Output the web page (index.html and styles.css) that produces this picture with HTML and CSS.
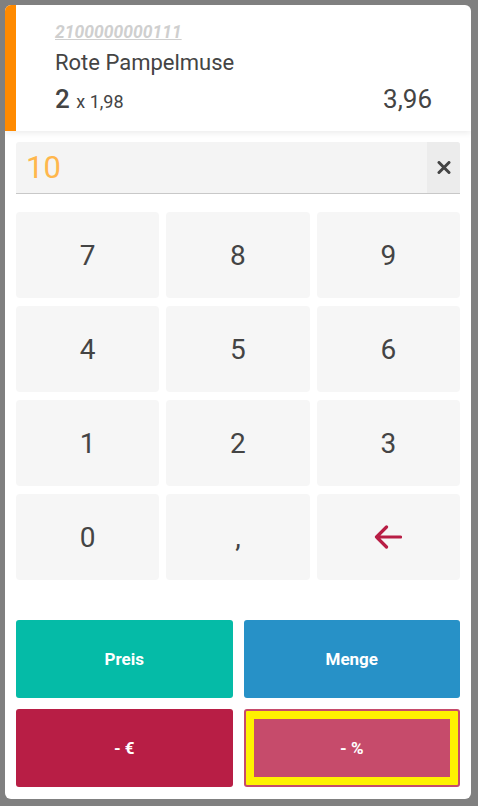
FILE: index.html
```html
<!DOCTYPE html>
<html lang="de">

<head>
    <meta charset="UTF-8">
    <link rel="stylesheet" href="styles.css">
</head>

<body>

    <div class="panel">
        <!-- gewählter Artikel -->
        <div class="artikel">
            <div class="ean">2100000000111</div>
            <div class="name">Rote Pampelmuse</div>
            <div class="zeile">
                <span class="menge">2 <small>x 1,98</small></span>
                <span class="summe">3,96</span>
            </div>
        </div>

        <!-- Eingabefeld -->
        <div class="eingabe">
            <span class="wert">10</span>
            <button class="leeren" type="button">
                <svg width="14" height="13" viewBox="0 0 14 13">
                    <path d="M2 1.5 L12 11.5 M12 1.5 L2 11.5" stroke="#444" stroke-width="3" stroke-linecap="round" fill="none" />
                </svg>
            </button>
        </div>

        <!-- Zifferntasten -->
        <div class="tasten">
            <button type="button">7</button>
            <button type="button">8</button>
            <button type="button">9</button>
            <button type="button">4</button>
            <button type="button">5</button>
            <button type="button">6</button>
            <button type="button">1</button>
            <button type="button">2</button>
            <button type="button">3</button>
            <button type="button">0</button>
            <button type="button">,</button>
            <button type="button" class="zurueck">
                <svg width="28" height="24" viewBox="0 0 28 24">
                    <path d="M26.5 12 H2.5 M12.5 2 L2.5 12 L12.5 22" stroke="#b81e45" stroke-width="3.2" stroke-linecap="round" stroke-linejoin="round" fill="none" />
                </svg>
            </button>
        </div>

        <!-- Aktionen -->
        <div class="aktionen">
            <button type="button" class="preis">Preis</button>
            <button type="button" class="mengeBtn">Menge</button>
            <button type="button" class="rabattEuro">- €</button>
            <button type="button" class="rabattProzent aktiv">- %</button>
        </div>
    </div>

</body>

</html>
```

FILE: styles.css
```css
/*hintergrund*/
body {
    margin: 0;
    padding: 5px;
    background-color: #808080;
    font-family: Roboto, "Noto Sans", sans-serif;
}

/*weiße Karte*/
.panel {
    width: 466px;
    height: 794px;
    background-color: white;
    border-radius: 6px;
    overflow: hidden;
    display: flex;
    flex-direction: column;
}

/*artikelkopf mit orangem Rand*/
.artikel {
    height: 126px;
    box-sizing: border-box;
    border-left: 11px solid #ff8a00;
    padding: 17px 39px 0 39px;
    box-shadow: 0 2px 6px rgba(0, 0, 0, 0.08);
    color: #444;
}

.ean {
    font-size: 17.5px;
    line-height: 20px;
    font-style: italic;
    font-weight: bold;
    color: #cfcfcf;
    text-decoration: underline;
}

.name {
    margin-top: 8px;
    font-size: 22px;
    line-height: 26px;
}

.zeile {
    margin-top: 8px;
    display: flex;
    justify-content: space-between;
    align-items: baseline;
    font-size: 26px;
    line-height: 30px;
}

.menge {
    font-weight: 500;
}

.menge small {
    font-size: 18px;
    font-weight: normal;
}

/*eingabefeld*/
.eingabe {
    margin: 11px 11px 0 11px;
    height: 51px;
    display: flex;
    align-items: center;
    background-color: #f4f4f4;
    border-bottom: 1px solid #c8c8c8;
    border-radius: 3px 3px 0 0;
}

.wert {
    flex: 1;
    padding-left: 10px;
    font-size: 31px;
    color: #ffb74d;
}

.leeren {
    width: 33px;
    height: 100%;
    border: 0;
    padding: 0;
    background-color: #ececec;
    border-radius: 0 3px 0 0;
    display: flex;
    align-items: center;
    justify-content: center;
}

/*zifferntasten*/
.tasten {
    margin: 18px 11px 0 11px;
    display: grid;
    grid-template-columns: repeat(3, 1fr);
    grid-template-rows: repeat(4, 86px);
    gap: 8px 7px;
}

.tasten button {
    border: 0;
    padding: 0;
    border-radius: 4px;
    background-color: #f6f6f6;
    font-family: Roboto, sans-serif;
    font-size: 28px;
    color: #444;
    display: flex;
    align-items: center;
    justify-content: center;
}

/*aktionsknöpfe*/
.aktionen {
    margin: 40px 11px 0 11px;
    display: grid;
    grid-template-columns: 1fr 1fr;
    grid-template-rows: repeat(2, 78px);
    gap: 11px;
}

.aktionen button {
    border: 0;
    padding: 0;
    border-radius: 3px;
    font-family: Roboto, sans-serif;
    font-size: 17px;
    font-weight: bold;
    color: white;
}

.aktionen .preis {
    background-color: #05bba7;
}

.aktionen .mengeBtn {
    background-color: #2791c7;
}

.aktionen .rabattEuro {
    background-color: #b81e45;
}

.aktionen .rabattProzent {
    background-color: #c64b6b;
}

/*fokus-rahmen*/
.aktionen .aktiv {
    outline: 8px solid #fff200;
    outline-offset: -10px;
}
```
